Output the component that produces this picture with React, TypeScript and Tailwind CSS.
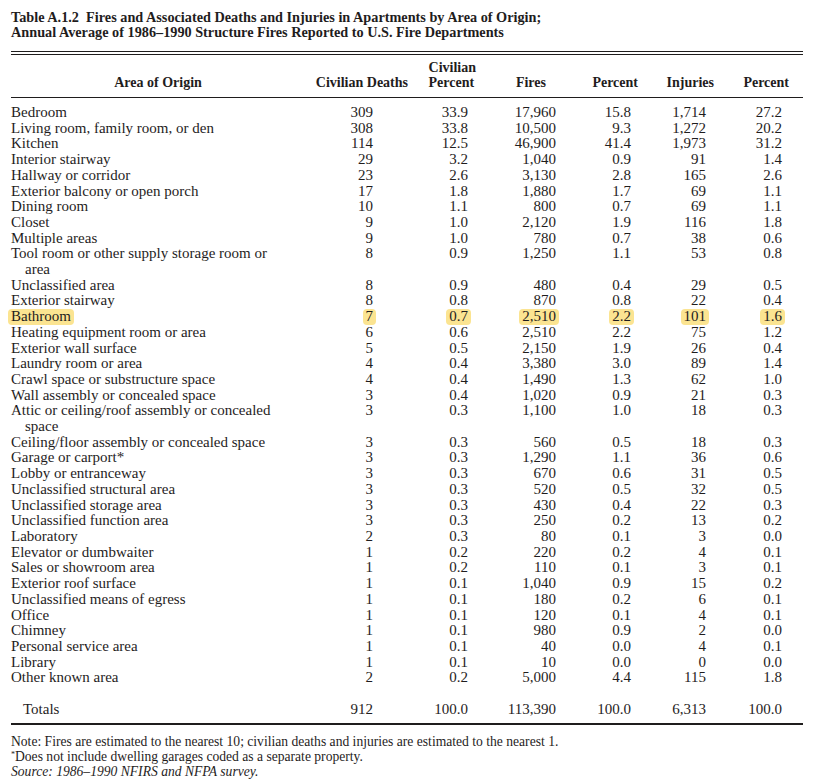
import React from "react";

type Row = { label: string; cont?: string; v: string[]; hl?: boolean };

const rows: Row[] = [
  { label: "Bedroom", v: ["309", "33.9", "17,960", "15.8", "1,714", "27.2"] },
  { label: "Living room, family room, or den", v: ["308", "33.8", "10,500", "9.3", "1,272", "20.2"] },
  { label: "Kitchen", v: ["114", "12.5", "46,900", "41.4", "1,973", "31.2"] },
  { label: "Interior stairway", v: ["29", "3.2", "1,040", "0.9", "91", "1.4"] },
  { label: "Hallway or corridor", v: ["23", "2.6", "3,130", "2.8", "165", "2.6"] },
  { label: "Exterior balcony or open porch", v: ["17", "1.8", "1,880", "1.7", "69", "1.1"] },
  { label: "Dining room", v: ["10", "1.1", "800", "0.7", "69", "1.1"] },
  { label: "Closet", v: ["9", "1.0", "2,120", "1.9", "116", "1.8"] },
  { label: "Multiple areas", v: ["9", "1.0", "780", "0.7", "38", "0.6"] },
  { label: "Tool room or other supply storage room or", cont: "area", v: ["8", "0.9", "1,250", "1.1", "53", "0.8"] },
  { label: "Unclassified area", v: ["8", "0.9", "480", "0.4", "29", "0.5"] },
  { label: "Exterior stairway", v: ["8", "0.8", "870", "0.8", "22", "0.4"] },
  { label: "Bathroom", v: ["7", "0.7", "2,510", "2.2", "101", "1.6"], hl: true },
  { label: "Heating equipment room or area", v: ["6", "0.6", "2,510", "2.2", "75", "1.2"] },
  { label: "Exterior wall surface", v: ["5", "0.5", "2,150", "1.9", "26", "0.4"] },
  { label: "Laundry room or area", v: ["4", "0.4", "3,380", "3.0", "89", "1.4"] },
  { label: "Crawl space or substructure space", v: ["4", "0.4", "1,490", "1.3", "62", "1.0"] },
  { label: "Wall assembly or concealed space", v: ["3", "0.4", "1,020", "0.9", "21", "0.3"] },
  { label: "Attic or ceiling/roof assembly or concealed", cont: "space", v: ["3", "0.3", "1,100", "1.0", "18", "0.3"] },
  { label: "Ceiling/floor assembly or concealed space", v: ["3", "0.3", "560", "0.5", "18", "0.3"] },
  { label: "Garage or carport*", v: ["3", "0.3", "1,290", "1.1", "36", "0.6"] },
  { label: "Lobby or entranceway", v: ["3", "0.3", "670", "0.6", "31", "0.5"] },
  { label: "Unclassified structural area", v: ["3", "0.3", "520", "0.5", "32", "0.5"] },
  { label: "Unclassified storage area", v: ["3", "0.3", "430", "0.4", "22", "0.3"] },
  { label: "Unclassified function area", v: ["3", "0.3", "250", "0.2", "13", "0.2"] },
  { label: "Laboratory", v: ["2", "0.3", "80", "0.1", "3", "0.0"] },
  { label: "Elevator or dumbwaiter", v: ["1", "0.2", "220", "0.2", "4", "0.1"] },
  { label: "Sales or showroom area", v: ["1", "0.2", "110", "0.1", "3", "0.1"] },
  { label: "Exterior roof surface", v: ["1", "0.1", "1,040", "0.9", "15", "0.2"] },
  { label: "Unclassified means of egress", v: ["1", "0.1", "180", "0.2", "6", "0.1"] },
  { label: "Office", v: ["1", "0.1", "120", "0.1", "4", "0.1"] },
  { label: "Chimney", v: ["1", "0.1", "980", "0.9", "2", "0.0"] },
  { label: "Personal service area", v: ["1", "0.1", "40", "0.0", "4", "0.1"] },
  { label: "Library", v: ["1", "0.1", "10", "0.0", "0", "0.0"] },
  { label: "Other known area", v: ["2", "0.2", "5,000", "4.4", "115", "1.8"] },
];

const bodyGrid = "grid grid-cols-[300px_62px_95px_88px_75px_75px_76px]";
const headGrid = "grid grid-cols-[294px_103px_68px_70px_92px_76px_75px] items-end";

function Hl({ on, children, left }: { on?: boolean; children: React.ReactNode; left?: boolean }) {
  if (!on) return <>{children}</>;
  return (
    <span
      className={
        "inline-block rounded-[4px] bg-[#fbe491] px-[3px] " + (left ? "-ml-[3px]" : "-mr-[3px]")
      }
    >
      {children}
    </span>
  );
}

export default function App() {
  return (
    <div
      className="w-[815px] min-h-[779px] bg-white pt-[10px] pl-[11px] pr-[12px] text-[#1f1d1d]"
      style={{ fontFamily: '"Liberation Serif", "Times New Roman", serif' }}
    >
      <div className="text-[14.25px] font-bold leading-[15px]">
        <div>Table A.1.2&nbsp; Fires and Associated Deaths and Injuries in Apartments by Area of Origin;</div>
        <div>Annual Average of 1986–1990 Structure Fires Reported to U.S. Fire Departments</div>
      </div>

      <div className="mt-[11px] h-[4px] border-t border-b border-[#1f1d1d]" />

      <div className={headGrid + " mt-[5px] pb-[7px] text-[14px] font-bold leading-[15px]"}>
        <div className="text-center">Area of Origin</div>
        <div className="text-right">Civilian Deaths</div>
        <div className="text-right">
          <div className="inline-block text-left">
            <div>Civilian</div>
            <div>Percent</div>
          </div>
        </div>
        <div className="text-right">Fires</div>
        <div className="text-right">Percent</div>
        <div className="text-right">Injuries</div>
        <div className="text-right">Percent</div>
      </div>

      <div className="border-t border-[#1f1d1d]" />

      <div className="pt-[7px] text-[15px] leading-[15.7px]">
        {rows.map((r, i) => (
          <div key={i} className={bodyGrid}>
            <div>
              <div>
                <Hl on={r.hl} left>
                  {r.label}
                </Hl>
              </div>
              {r.cont && <div className="pl-[14px]">{r.cont}</div>}
            </div>
            {r.v.map((x, j) => (
              <div key={j} className="text-right">
                <Hl on={r.hl}>{x}</Hl>
              </div>
            ))}
          </div>
        ))}
      </div>

      <div className={bodyGrid + " mt-[16px] text-[15px] leading-[15.7px]"}>
        <div className="pl-[12px]">Totals</div>
        <div className="text-right">912</div>
        <div className="text-right">100.0</div>
        <div className="text-right">113,390</div>
        <div className="text-right">100.0</div>
        <div className="text-right">6,313</div>
        <div className="text-right">100.0</div>
      </div>

      <div className="mt-[5px] h-[2px] bg-[#1f1d1d]" />

      <div className="mt-[9px] text-[13.6px] leading-[15px]">
        <div>Note: Fires are estimated to the nearest 10; civilian deaths and injuries are estimated to the nearest 1.</div>
        <div>
          <sup className="text-[8px]">*</sup>Does not include dwelling garages coded as a separate property.
        </div>
        <div className="italic">Source: 1986–1990 NFIRS and NFPA survey.</div>
      </div>
    </div>
  );
}
